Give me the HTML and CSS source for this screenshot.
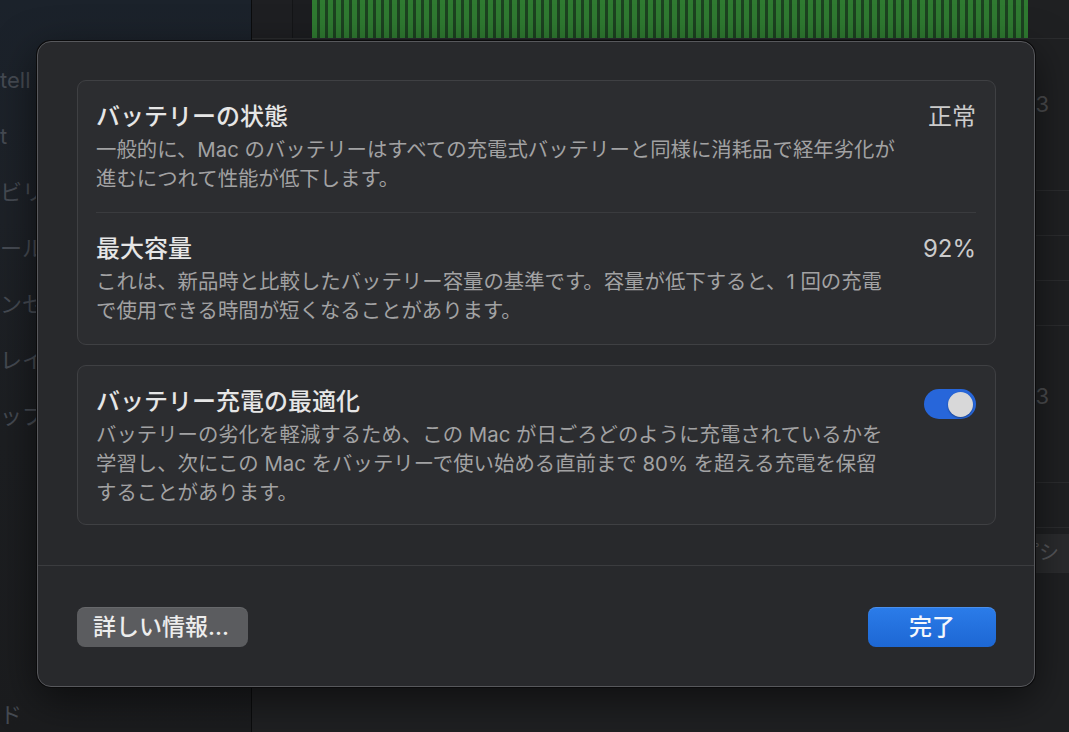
FILE: index.html
```html
<!DOCTYPE html>
<html lang="ja">
<head>
<meta charset="utf-8">
<title>バッテリーの状態</title>
<link rel="stylesheet" href="styles.css">
</head>
<body>
<div class="screen">
  <aside class="sidebar">
    <div class="side-item">tell</div>
    <div class="side-item">t</div>
    <div class="side-item">ビリ</div>
    <div class="side-item">ール</div>
    <div class="side-item">ンセ</div>
    <div class="side-item">レイ</div>
    <div class="side-item">ップ</div>
    <div class="side-item last">ド</div>
  </aside>
  <div class="vline"></div>
  <main class="main">
    <div class="topstrip">
      <div class="col-a"></div>
      <div class="col-b"></div>
      <div class="bars"></div>
      <div class="col-c"></div>
    </div>
    <div class="rows">
      <div class="row row-big"><span class="row-num">2023</span></div>
      <div class="row row-sm"></div>
      <div class="row row-sm"></div>
      <div class="row row-sm"></div>
      <div class="row row-big2"><span class="row-num">2023</span></div>
      <div class="row row-sm"></div>
      <div class="row row-tab"><span class="tab">アプシ</span></div>
      <div class="row row-rest"></div>
    </div>
  </main>

  <div class="dialog">
    <div class="dialog-body">
      <section class="card">
        <div class="setting">
          <div class="setting-text">
            <div class="title">バッテリーの状態</div>
            <div class="desc">一般的に、Mac のバッテリーはすべての充電式バッテリーと同様に消耗品で経年劣化が<br>進むにつれて性能が低下します。</div>
          </div>
          <div class="value">正常</div>
        </div>
        <div class="setting">
          <div class="setting-text">
            <div class="title">最大容量</div>
            <div class="desc">これは、新品時と比較したバッテリー容量の基準です。容量が低下すると、1 回の充電<br>で使用できる時間が短くなることがあります。</div>
          </div>
          <div class="value">92%</div>
        </div>
      </section>
      <section class="card">
        <div class="setting setting-last">
          <div class="setting-text">
            <div class="title">バッテリー充電の最適化</div>
            <div class="desc">バッテリーの劣化を軽減するため、この Mac が日ごろどのように充電されているかを<br>学習し、次にこの Mac をバッテリーで使い始める直前まで 80% を超える充電を保留<br>することがあります。</div>
          </div>
          <div class="toggle"><div class="knob"></div></div>
        </div>
      </section>
    </div>
    <footer class="footer">
      <button class="btn btn-secondary">詳しい情報...</button>
      <button class="btn btn-primary">完了</button>
    </footer>
  </div>
</div>
</body>
</html>
```

FILE: styles.css
```css
html, body {
  margin: 0;
  padding: 0;
  background: #1d1e20;
}

.screen {
  position: relative;
  width: 1069px;
  height: 732px;
  overflow: hidden;
  display: flex;
  background: #1d1e20;
  font-family: Inter, "Noto Sans CJK JP", sans-serif;
}

/* ---------- background window ---------- */
.sidebar {
  width: 251px;
  flex: none;
  box-sizing: border-box;
  padding: 52px 0 4px;
  display: flex;
  flex-direction: column;
  background: linear-gradient(180deg, #1b222b 0, #1d2127 30%, #1c1e21 60%, #1b1c1e 100%);
}

.side-item {
  color: #454a52;
  font-size: 22px;
  line-height: 56px;
  white-space: nowrap;
}

.side-item.last {
  margin-top: auto;
  line-height: 26px;
}

.vline {
  width: 1px;
  flex: none;
  background: #0b0c0d;
}

.main {
  flex: 1;
  display: flex;
  flex-direction: column;
  background: #1f2022;
}

.topstrip {
  height: 38px;
  flex: none;
  display: flex;
}

.col-a {
  width: 40px;
  background: #1e1f22;
  border-right: 1px solid #141517;
}

.col-b {
  width: 19px;
  background: #1c1d20;
}

.bars {
  width: 716px;
  background: repeating-linear-gradient(90deg, #2f7a31 0 5px, #1c4120 5px 8px);
}

.col-c {
  flex: 1;
  background: #1f2022;
}

.rows {
  flex: 1;
  display: flex;
  flex-direction: column;
}

.row {
  box-sizing: border-box;
  border-top: 1px solid #2b2c2e;
  display: flex;
  justify-content: flex-end;
  align-items: center;
  padding-right: 20px;
}

.row-big { height: 152px; align-items: flex-start; padding-top: 50px; }
.row-sm { height: 45px; }
.row-big2 { height: 157px; align-items: flex-start; padding-top: 55px; }
.row-tab { height: 45px; align-items: flex-end; padding-right: 0; }
.row-rest { flex: 1; }

.row-num {
  color: #4b4c4f;
  font-size: 22px;
  line-height: 30px;
}

.tab {
  height: 38px;
  line-height: 38px;
  padding: 0 10px 0 8px;
  background: #2a2b2d;
  color: #55565a;
  font-size: 20px;
}

/* ---------- dialog ---------- */
.dialog {
  position: absolute;
  left: 37px;
  top: 41px;
  width: 998px;
  height: 646px;
  box-sizing: border-box;
  background: #28292c;
  border: 1px solid #57585c;
  border-radius: 14px;
  box-shadow: 0 0 0 1px #0b0b0c, 0 12px 40px rgba(0, 0, 0, 0.55);
  display: flex;
  flex-direction: column;
}

.dialog-body {
  padding: 38px 38px 40px 39px;
  display: flex;
  flex-direction: column;
  gap: 20px;
}

.card {
  background: #2c2d30;
  border: 1px solid #3f4043;
  border-radius: 9px;
  padding: 0 19px 0 18px;
}

.setting {
  display: flex;
  justify-content: space-between;
  align-items: flex-start;
  gap: 20px;
  padding: 20px 0 19px;
}

.setting + .setting {
  border-top: 1px solid #3a3b3e;
}

.setting-last {
  padding-bottom: 17px;
}

.setting-text {
  flex: 1;
  min-width: 0;
}

.title {
  font-size: 24px;
  line-height: 32px;
  font-weight: 500;
  color: #e6e6e6;
}

.desc {
  margin-top: 2px;
  font-size: 20.4px;
  line-height: 29px;
  color: #a2a2a3;
}

.value {
  font-size: 24px;
  line-height: 32px;
  color: #cbcbcb;
  white-space: nowrap;
}

.toggle {
  flex: none;
  width: 52px;
  height: 30px;
  margin-top: 3px;
  box-sizing: border-box;
  padding-right: 3px;
  border-radius: 15px;
  background: #2766da;
  display: flex;
  justify-content: flex-end;
  align-items: center;
}

.knob {
  width: 25px;
  height: 25px;
  border-radius: 50%;
  background: #d8d8d9;
  box-shadow: 0 1px 2px rgba(0, 0, 0, 0.35);
}

.footer {
  flex: 1;
  border-top: 1px solid #3b3c3f;
  display: flex;
  justify-content: space-between;
  align-items: flex-start;
  padding: 41px 38px 0 39px;
}

.btn {
  height: 40px;
  border: none;
  border-radius: 8px;
  font-family: Inter, "Noto Sans CJK JP", sans-serif;
  font-size: 23px;
  font-weight: 500;
  line-height: 40px;
  padding: 0 16px;
  cursor: default;
}

.btn-secondary {
  width: 171px;
  text-align: left;
  background: #5b5c5f;
  color: #ededed;
  box-shadow: inset 0 1px 0 rgba(255, 255, 255, 0.08);
}

.btn-primary {
  width: 128px;
  text-align: center;
  background: linear-gradient(180deg, #2b7ce9 0%, #1d67d4 100%);
  color: #f4f7fc;
  box-shadow: inset 0 1px 0 rgba(255, 255, 255, 0.15);
}
```
